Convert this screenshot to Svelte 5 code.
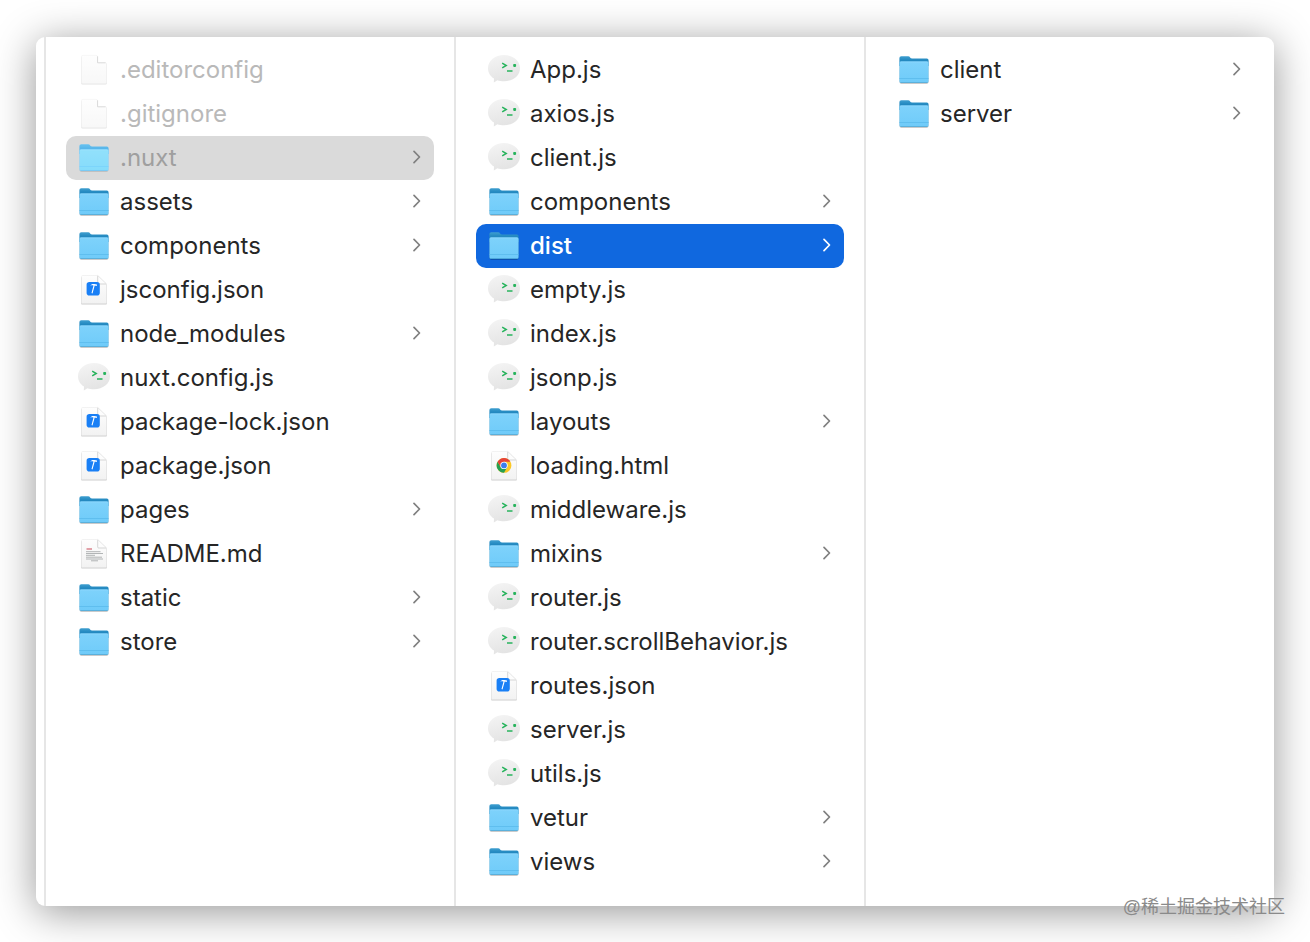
<script lang="ts">
  type Kind = "folder" | "script" | "json" | "html" | "text" | "blank";
  type Entry = { name: string; kind: Kind; hidden?: boolean };

  const file = (name: string, kind: Kind = "script"): Entry => ({ name, kind });
  const folder = (name: string): Entry => ({ name, kind: "folder" });

  const columns: Entry[][] = [
    [
      { name: ".editorconfig", kind: "blank", hidden: true },
      { name: ".gitignore", kind: "blank", hidden: true },
      { name: ".nuxt", kind: "folder", hidden: true },
      folder("assets"),
      folder("components"),
      file("jsconfig.json", "json"),
      folder("node_modules"),
      file("nuxt.config.js"),
      file("package-lock.json", "json"),
      file("package.json", "json"),
      folder("pages"),
      file("README.md", "text"),
      folder("static"),
      folder("store"),
    ],
    [
      file("App.js"),
      file("axios.js"),
      file("client.js"),
      folder("components"),
      folder("dist"),
      file("empty.js"),
      file("index.js"),
      file("jsonp.js"),
      folder("layouts"),
      file("loading.html", "html"),
      file("middleware.js"),
      folder("mixins"),
      file("router.js"),
      file("router.scrollBehavior.js"),
      file("routes.json", "json"),
      file("server.js"),
      file("utils.js"),
      folder("vetur"),
      folder("views"),
    ],
    [folder("client"), folder("server")],
  ];

  let selected = $state([".nuxt", "dist", ""]);
  let focused = $state(1);

  function select(column: number, name: string) {
    selected[column] = name;
    focused = column;
  }
</script>

<svg class="sprites" width="0" height="0" aria-hidden="true">
  <defs>
    <linearGradient id="folder-back" x1="0" y1="0" x2="0" y2="1">
      <stop offset="0" stop-color="#3f9fd0" />
      <stop offset="0.4" stop-color="#2489c0" />
      <stop offset="1" stop-color="#2489c0" />
    </linearGradient>
    <linearGradient id="folder-front" x1="0" y1="0" x2="0" y2="1">
      <stop offset="0" stop-color="#7ed2fb" />
      <stop offset="1" stop-color="#6fcbf9" />
    </linearGradient>
    <linearGradient id="paper" x1="0" y1="0" x2="0" y2="1">
      <stop offset="0" stop-color="#fefefe" />
      <stop offset="1" stop-color="#f2f2f2" />
    </linearGradient>
    <linearGradient id="bubble" x1="0" y1="0" x2="0.3" y2="1">
      <stop offset="0" stop-color="#f5f5f5" />
      <stop offset="1" stop-color="#e4e4e4" />
    </linearGradient>

    <symbol id="sheet" viewBox="0 0 32 32">
      <path d="M5 2.4H20L28.8 11V29.4a1.2 1.2 0 0 1-1.2 1.2H4.4A1.2 1.2 0 0 1 3.2 29.4V3.6z" fill="#000" opacity="0.2" />
      <path d="M4.6 1.5H19.7L28.5 10V28.4a1.2 1.2 0 0 1-1.2 1.2H4.7a1.2 1.2 0 0 1-1.2-1.2V2.7a1.2 1.2 0 0 1 1.1-1.2z" fill="url(#paper)" stroke="#e6e6e6" stroke-width="0.5" />
      <path d="M19.7 1.5V9a1 1 0 0 0 1 1H28.5z" fill="#fdfdfd" />
      <path d="M19.7 1.8V9a1 1 0 0 0 1 1H28.2" fill="none" stroke="#c4c4c4" stroke-width="0.7" />
      <path d="M19.7 1.5L28.5 10" stroke="#dcdcdc" stroke-width="0.6" />
    </symbol>

    <symbol id="folder" viewBox="0 0 32 32">
      <rect x="1.5" y="8" width="29" height="21.8" rx="1.8" fill="#000" opacity="0.28" />
      <path d="M1.4 4.1A1.9 1.9 0 0 1 3.3 2.2H10.2C12.1 2.2 12.1 4.6 14.2 4.6H28.8A1.8 1.8 0 0 1 30.6 6.4V12H1.4z" fill="url(#folder-back)" />
      <path d="M1.4 9A1.5 1.5 0 0 1 2.9 7.5H29.1A1.5 1.5 0 0 1 30.6 9V27.3A1.5 1.5 0 0 1 29.1 28.8H2.9A1.5 1.5 0 0 1 1.4 27.3z" fill="url(#folder-front)" />
      <path d="M2.4 7.9H29.6" stroke="#98dcff" stroke-width="0.7" />
      <path d="M1.4 24.5H30.6" stroke="#57b8ea" stroke-width="0.7" />
      <path d="M2.4 28.5H29.6" stroke="#4aa6d6" stroke-width="0.7" />
    </symbol>

    <symbol id="blank" viewBox="0 0 32 32">
      <path d="M4.6 2.2H19.7V9.8H28.8V29.2a1.2 1.2 0 0 1-1.2 1.2H4.4A1.2 1.2 0 0 1 3.2 29.2V3.4z" fill="#000" opacity="0.22" />
      <path d="M4.8 1.4H18.2a1.5 1.5 0 0 1 1.4 1.4V8.6H27.2a1.3 1.3 0 0 1 1.3 1.3V28.3a1.2 1.2 0 0 1-1.2 1.2H4.7a1.2 1.2 0 0 1-1.2-1.2V2.7a1.3 1.3 0 0 1 1.3-1.3z" fill="url(#paper)" stroke="#e2e2e2" stroke-width="0.6" />
      <path d="M19.6 2.4V8.8H27.6" fill="none" stroke="#a8a8a8" stroke-width="0.8" />
    </symbol>

    <symbol id="script" viewBox="0 0 32 32">
      <path d="M16 1C25 1 32 6.6 32 14.3S25 27.2 16 27.2C13.5 27.2 11.4 26.9 9.4 26.2C8 27 6.8 27.9 5.8 28.6L6 24.6C2.3 22.3 0 18.7 0 14.3C0 6.6 7 1 16 1z" fill="url(#bubble)" />
      <path d="M14.2 9.2L18.2 11.5L14.2 13.8" fill="none" stroke="#27b35c" stroke-width="1.5" />
      <path d="M19 17H24.5" stroke="#27b35c" stroke-width="1.5" />
      <rect x="25.2" y="10" width="2.9" height="2.9" rx="0.8" fill="#27b35c" />
    </symbol>

    <!-- hammer on a blue tile -->
    <symbol id="json" viewBox="0 0 32 32">
      <use href="#sheet" />
      <rect x="8.6" y="8" width="13.2" height="13.6" rx="2.8" fill="#197ff5" />
      <path d="M12.2 11.7C13 10.2 14.8 9.8 16.2 10.1L19 10.6L18.8 11.9L16.7 11.6L14.5 19.4L13.5 19L15.5 11.5C14.2 11.1 13 11.2 12.2 11.7z" fill="#fff" />
    </symbol>

    <symbol id="html" viewBox="0 0 32 32">
      <use href="#sheet" />
      <circle cx="16" cy="15.4" r="7.4" fill="#fbc726" />
      <path d="M16 15.4L9.6 11.7A7.4 7.4 0 0 1 22.4 11.7H16z" fill="#e5433a" />
      <path d="M9.6 11.7A7.4 7.4 0 0 0 16 22.8L19.2 17.2L12.8 17.2z" fill="#26a052" />
      <path d="M9.6 11.7L12.8 17.2L16 15.4L16 11.7z" fill="#e5433a" />
      <circle cx="16" cy="15.4" r="3.7" fill="#fff" />
      <circle cx="16" cy="15.4" r="2.9" fill="#3b7ded" />
    </symbol>

    <symbol id="text" viewBox="0 0 32 32">
      <use href="#sheet" />
      <path d="M8.5 11H14" stroke="#dc8b95" stroke-width="1.6" />
      <path d="M8 13.7H22.5M8 15.5H25M8 17.3H17M8 19.2H24M8 21H25M13 22.8H20" stroke="#a9adae" stroke-width="0.9" />
    </symbol>
  </defs>
</svg>

<main class="desktop">
  <div class="window">
    {#each columns as entries, c}
      <ul class="column">
        {#each entries as entry (entry.name)}
          <li>
            <button
              class="row"
              class:hidden-file={entry.hidden}
              class:selected={selected[c] === entry.name}
              class:focused={selected[c] === entry.name && focused === c}
              onclick={() => select(c, entry.name)}
            >
              <svg class="icon" viewBox="0 0 32 32" aria-hidden="true"><use href="#{entry.kind}" /></svg>
              <span class="name">{entry.name}</span>
              {#if entry.kind === "folder"}
                <svg class="chevron" viewBox="0 0 12 16" aria-hidden="true"><path d="M4 1.4L9.5 7L4 12.6" /></svg>
              {/if}
            </button>
          </li>
        {/each}
      </ul>
    {/each}
  </div>
  <span class="watermark">@稀土掘金技术社区</span>
</main>

<style>
  :global(body) {
    margin: 0;
    background: #fff;
  }

  .sprites {
    position: absolute;
  }

  .desktop {
    position: relative;
    box-sizing: border-box;
    min-height: 100vh;
    padding: 37px 36px 36px;
    display: flex;
    overflow: hidden;
    font-family: Inter, "Noto Sans", sans-serif;
  }

  .window {
    flex: 1;
    display: grid;
    grid-template-columns: repeat(3, minmax(0, 1fr));
    padding-left: 8px;
    background: #fff;
    border-radius: 9px 9px 0 9px;
    box-shadow: 0 6px 42px rgba(0, 0, 0, 0.42);
  }

  .column {
    margin: 0;
    padding: 11px 20px 22px;
    border-left: 2px solid #e6e6e6;
    list-style: none;
  }

  /* Rows */
  .row {
    display: flex;
    align-items: center;
    gap: 10px;
    width: 100%;
    height: 44px;
    padding: 0 12px;
    border: none;
    border-radius: 10px;
    background: transparent;
    color: #262626;
    font-family: inherit;
    font-size: 24px;
    line-height: 32px;
    text-align: left;
  }

  .icon {
    width: 32px;
    height: 32px;
    flex-shrink: 0;
  }

  .name {
    flex: 1;
    white-space: nowrap;
  }

  .chevron {
    width: 12px;
    height: 16px;
    flex-shrink: 0;
    fill: none;
    stroke: #808080;
    stroke-width: 1.7;
    stroke-linecap: round;
    stroke-linejoin: round;
  }

  .hidden-file {
    color: #b9b9b9;
  }
  .hidden-file .icon {
    opacity: 0.5;
  }

  .selected {
    background: #dadada;
  }
  .selected.hidden-file {
    color: #9f9f9f;
  }
  .selected.hidden-file .icon {
    filter: contrast(0.5) brightness(1.3) saturate(1.6);
    opacity: 0.9;
  }

  .focused {
    background: #1068df;
    color: #fff;
    font-weight: 500;
  }
  .focused .chevron {
    stroke: #fff;
  }

  .watermark {
    position: absolute;
    right: 25px;
    bottom: 22px;
    color: #8a8a8a;
    font-family: "Liberation Sans", "Noto Sans CJK SC", sans-serif;
    font-size: 18px;
    line-height: 26px;
  }
</style>
